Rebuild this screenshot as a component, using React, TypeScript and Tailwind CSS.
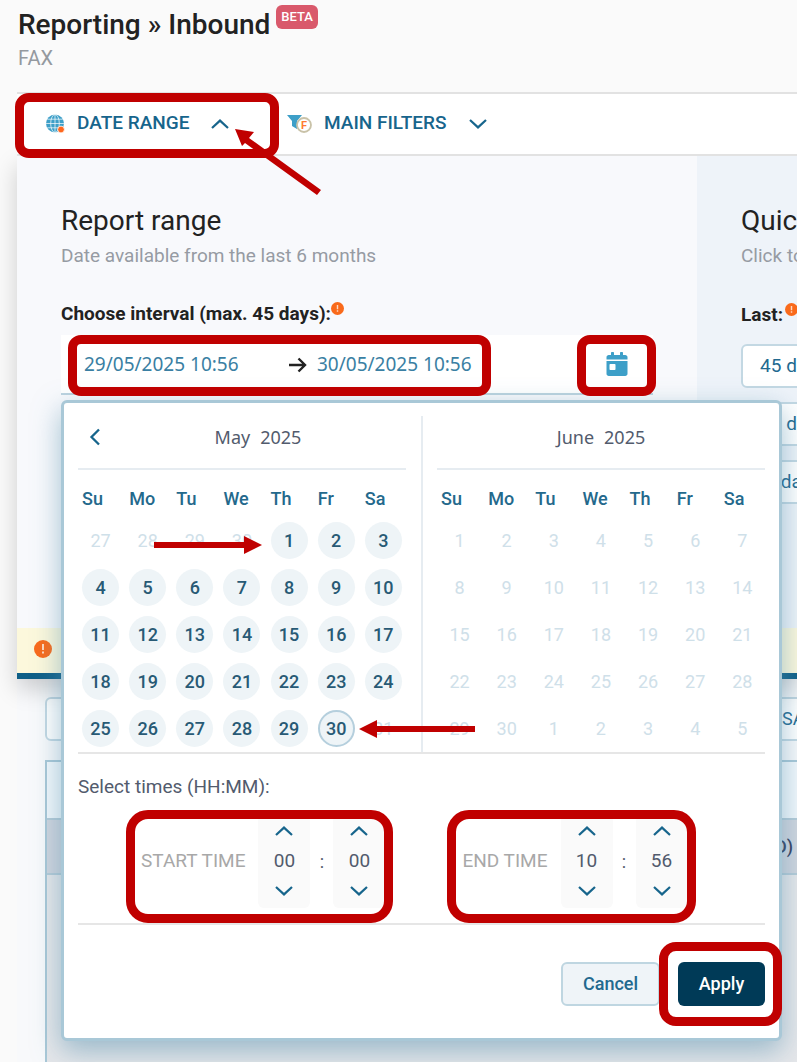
import { useState, type ReactNode } from "react";
import clsx from "clsx";
import { FaCalendarDay } from "react-icons/fa";

const WEEKDAYS = ["Su", "Mo", "Tu", "We", "Th", "Fr", "Sa"];

interface Day {
  label: number;
  enabled: boolean;
}

function buildDays(prev: number[], total: number, next: number[], lastEnabled: number): Day[] {
  return [
    ...prev.map((label) => ({ label, enabled: false })),
    ...Array.from({ length: total }, (_, i) => ({ label: i + 1, enabled: i < lastEnabled })),
    ...next.map((label) => ({ label, enabled: false })),
  ];
}

const MAY = buildDays([27, 28, 29, 30], 31, [], 30);
const JUNE = buildDays([], 30, [1, 2, 3, 4, 5], 0);

function Chevron({ up = false }: { up?: boolean }) {
  return (
    <svg width="18" height="10" viewBox="0 0 18 10" fill="none" stroke="#17658c" strokeWidth="2.2" aria-hidden="true">
      <path d={up ? "M1 9 L9 1.6 L17 9" : "M1 1 L9 8.4 L17 1"} />
    </svg>
  );
}

function GlobeIcon() {
  return (
    <svg width="19" height="20" viewBox="0 0 19 20" aria-hidden="true">
      <circle cx="9" cy="9.5" r="9" fill="#3d9fc8" />
      <g fill="none" stroke="#fff" strokeWidth="0.7">
        <ellipse cx="9" cy="9.5" rx="4.3" ry="9" />
        <path d="M9 0.5V18.5M0 9.5H18M1.2 5.2H16.8M1.2 13.8H16.8" />
      </g>
      <circle cx="15" cy="15.5" r="3.4" fill="#ff671d" stroke="#fff" strokeWidth="0.8" />
    </svg>
  );
}

function FilterIcon() {
  return (
    <svg width="25" height="20" viewBox="0 0 25 20" aria-hidden="true">
      <path d="M0 1H15L10 7V15L5 12V7Z" fill="#3d9fc8" />
      <circle cx="17" cy="11" r="7" fill="#fff" stroke="#c9c2a8" strokeWidth="1.8" />
      <text x="17" y="15" textAnchor="middle" fontFamily="Roboto, sans-serif" fontSize="11" fontWeight="700" fill="#ff7a33">
        F
      </text>
    </svg>
  );
}

function AlertIcon({ size }: { size: number }) {
  return (
    <svg width={size} height={size} viewBox="0 0 18 18" className="shrink-0" aria-hidden="true">
      <circle cx="9" cy="9" r="9" fill="#f96a1b" />
      <path d="M8 4H10V10H8ZM8 11.5H10V13.5H8Z" fill="#ffd9c2" />
    </svg>
  );
}

function Highlight({ className }: { className: string }) {
  return <span className={clsx("pointer-events-none absolute z-20 border-[9px] border-[#c00000]", className)} />;
}

function NavTab({ icon, label, open }: { icon: ReactNode; label: string; open: boolean }) {
  return (
    <button
      type="button"
      aria-expanded={open}
      className="flex h-full items-center whitespace-nowrap text-[19px] font-medium text-[#17658c]"
    >
      {icon}
      <span className="ml-3">{label}</span>
      <span className="ml-[22px]">
        <Chevron up={open} />
      </span>
    </button>
  );
}

function Month({ title, days, selected, onSelect, back = false }: {
  title: string;
  days: Day[];
  selected?: number;
  onSelect?: (day: number) => void;
  back?: boolean;
}) {
  const [name, year] = title.split(" ");
  return (
    <div className="w-[328px]">
      <div className="relative flex h-[54px] items-center justify-center border-b-2 border-[#e6ecf1] pb-[10px] font-['Noto_Sans',sans-serif] text-lg text-[#525b6d]">
        {back && (
          <button type="button" aria-label="Previous month" className="absolute left-[11px]">
            <svg width="12" height="18" viewBox="0 0 12 18" fill="none" stroke="#17658c" strokeWidth="2.3">
              <path d="M10 1.5 L2.5 9 L10 16.5" />
            </svg>
          </button>
        )}
        <span className={clsx("flex gap-[10px]", back && "pl-8")}>
          <span>{name}</span>
          <span>{year}</span>
        </span>
      </div>
      <div className="grid grid-cols-7 gap-x-[10px] px-1 pt-[17px] text-lg leading-6 font-medium text-[#24698c]">
        {WEEKDAYS.map((day) => (
          <span key={day} className="w-[37px]">{day}</span>
        ))}
      </div>
      <div className="grid grid-cols-7 gap-[10px] px-1 pt-[11px] pb-[5px]">
        {days.map((day, i) => (
          <button
            key={i}
            type="button"
            disabled={!day.enabled}
            onClick={() => onSelect?.(day.label)}
            className={clsx(
              "flex h-[37px] w-[37px] items-center justify-center rounded-full text-lg",
              day.enabled ? "bg-[#eef4f7] font-medium text-[#285a75]" : "text-[#cfe0e9]",
              day.enabled && day.label === selected && "border-2 border-[#b5cfdd]"
            )}
          >
            {day.label}
          </button>
        ))}
      </div>
    </div>
  );
}

function Spinner({ label, initial, max }: { label: string; initial: number; max: number }) {
  const [value, setValue] = useState(initial);
  const step = (delta: number) => setValue((v) => (v + delta + max) % max);
  return (
    <div className="flex h-[93px] w-[52px] flex-col items-center justify-between rounded-md bg-[#fafafa] pt-[11px] pb-3">
      <button type="button" aria-label={`${label} up`} onClick={() => step(1)}>
        <Chevron up />
      </button>
      <input
        aria-label={label}
        readOnly
        value={String(value).padStart(2, "0")}
        className="w-10 bg-transparent text-center text-[19px] leading-6 text-[#525b6d] outline-none"
      />
      <button type="button" aria-label={`${label} down`} onClick={() => step(-1)}>
        <Chevron />
      </button>
    </div>
  );
}

function TimeGroup({ label, hours, minutes }: { label: string; hours: number; minutes: number }) {
  return (
    <div className="relative flex items-center">
      <span className="mr-[13px] text-[19px] whitespace-nowrap text-[#a8a8a8]">{label}</span>
      <Spinner label={`${label} hours`} initial={hours} max={24} />
      <span className="w-[23px] text-center text-lg text-[#525b6d]">:</span>
      <Spinner label={`${label} minutes`} initial={minutes} max={60} />
      <Highlight className="-top-[5px] -right-[8px] -bottom-[15px] -left-[15px] rounded-[22px]" />
    </div>
  );
}

function DatePopup() {
  const [selected, setSelected] = useState(30);
  return (
    <div className="absolute top-full left-0 z-10 mt-[5px] w-[721px] rounded-md border-[3px] border-[#a9c8d7] bg-white px-[14px] pb-8 shadow-[0_10px_28px_rgba(90,145,175,0.55)]">
      <div className="flex justify-between border-b-2 border-[#e6e6e6] pt-[13px]">
        <Month title="May 2025" days={MAY} selected={selected} onSelect={setSelected} back />
        <div className="w-[2px] bg-[#e6ecf1]" />
        <Month title="June 2025" days={JUNE} />
      </div>
      <p className="pt-[21px] text-[19px] leading-6 text-[#525b6d]">Select times (HH:MM):</p>
      <div className="flex gap-[77px] border-b-2 border-[#e6e6e6] pt-4 pb-[15px] pl-[63px]">
        <TimeGroup label="START TIME" hours={0} minutes={0} />
        <TimeGroup label="END TIME" hours={10} minutes={56} />
      </div>
      <div className="flex justify-end gap-[18px] pt-[37px] text-lg font-medium">
        <button type="button" className="h-11 w-[99px] rounded-md border-2 border-[#bfd6e1] bg-[#eff4f8] text-[#22698f]">
          Cancel
        </button>
        <div className="relative">
          <button type="button" className="h-11 w-[87px] rounded-md bg-[#003a57] text-white">
            Apply
          </button>
          <Highlight className="-top-[20px] -right-[17px] -bottom-[20px] -left-[19px] rounded-[17px]" />
        </div>
      </div>
      <svg className="absolute top-[133px] left-[90px] z-20" width="108" height="18" viewBox="0 0 108 18" fill="#c00000" aria-hidden="true">
        <path d="M0 6H90V0L108 9L90 18V12H0Z" />
      </svg>
      <svg className="absolute top-[317px] left-[295px] z-20" width="116" height="18" viewBox="0 0 116 18" fill="#c00000" aria-hidden="true">
        <path d="M116 6H18V0L0 9L18 18V12H116Z" />
      </svg>
    </div>
  );
}

function IntervalField() {
  return (
    <div className="relative mt-[9px]">
      <div className="flex h-[60px] items-center border-b-2 border-[#bcd3df] bg-white">
        <div className="relative ml-[7px] flex h-full w-[423px] items-center pt-px pl-4 font-['Noto_Sans',sans-serif] text-[19px] text-[#3a7fa3]">
          <input id="interval" aria-label="Start date" defaultValue="29/05/2025 10:56" className="w-[205px] bg-transparent outline-none" />
          <svg width="18" height="16" viewBox="0 0 18 16" fill="none" stroke="#222" strokeWidth="2.4" aria-hidden="true">
            <path d="M0 8H16M9.5 1.5L16 8L9.5 14.5" />
          </svg>
          <input aria-label="End date" defaultValue="30/05/2025 10:56" className="ml-[10px] w-[160px] bg-transparent outline-none" />
          <Highlight className="inset-x-0 top-0 -bottom-[3px] rounded-[13px]" />
        </div>
        <div className="relative mr-[-3px] ml-auto flex h-full w-[79px] items-center justify-center">
          <button type="button" aria-label="Open calendar" className="text-2xl text-[#3d9fc8]">
            <FaCalendarDay />
          </button>
          <Highlight className="inset-x-0 top-0 -bottom-[3px] rounded-[13px]" />
        </div>
      </div>
      <DatePopup />
    </div>
  );
}

export default function App() {
  return (
    <div className="flex min-h-screen flex-col overflow-hidden bg-[#fafafa] font-[Roboto,sans-serif] text-[#222]">
      <header className="h-[92px] pt-[9px] pl-[18px]">
        <div className="flex items-start">
          <h1 className="text-[28px] leading-8 font-medium">Reporting » Inbound</h1>
          <span className="-mt-1 ml-[6px] rounded-md bg-[#d9596b] px-[5px] text-[13px] leading-6 font-medium text-white">BETA</span>
        </div>
        <p className="mt-[3px] text-xl leading-7 text-[#94999f]">FAX</p>
      </header>

      <nav className="relative z-20 ml-[17px] flex h-16 border-y-2 border-[#e2e2e2] bg-white">
        <div className="relative w-[262px] pb-px pl-[29px]">
          <NavTab icon={<GlobeIcon />} label="DATE RANGE" open />
          <Highlight className="-top-px right-0 -bottom-[4px] -left-[2px] rounded-[14px]" />
          <svg className="absolute top-[34px] left-[217px] z-20" width="88" height="68" viewBox="0 0 88 68" fill="#c00000" aria-hidden="true">
            <path d="M1 1L20 4L15 10L87 62L83 67L11 15L8 18Z" />
          </svg>
        </div>
        <div className="pb-px pl-2">
          <NavTab icon={<FilterIcon />} label="MAIN FILTERS" open={false} />
        </div>
      </nav>

      <section className="relative z-10 ml-[17px] shadow-[0_10px_22px_rgba(0,0,0,0.18)]">
        <div className="flex min-h-[472px]">
          <div className="grow bg-[#f8f9fc] px-11 pt-[47px]">
            <h2 className="text-[28px] leading-9">Report range</h2>
            <p className="mt-[5px] text-[19px] leading-6 text-[#969ba3]">Date available from the last 6 months</p>
            <label htmlFor="interval" className="mt-[34px] flex text-[19px] leading-6 font-bold">
              Choose interval (max. 45 days):
              <AlertIcon size={13} />
            </label>
            <IntervalField />
          </div>
          <aside className="w-[100px] shrink-0 overflow-hidden bg-[#eef3f9] pt-[47px] pl-11 whitespace-nowrap">
            <h2 className="text-[28px] leading-9">Quick range</h2>
            <p className="mt-[5px] text-[19px] leading-6 text-[#969ba3]">Click to select</p>
            <p className="mt-[35px] flex gap-[2px] text-[19px] leading-6 font-bold">
              Last:
              <AlertIcon size={13} />
            </p>
            <div className="mt-[17px] flex w-[104px] flex-col gap-[14px] text-[19px] text-[#22698f]">
              {["45 days", "30 days", "7 days"].map((range) => (
                <button key={range} type="button" className="h-11 rounded-md border-2 border-[#c3d8e3] bg-white">
                  {range}
                </button>
              ))}
            </div>
          </aside>
        </div>
        <div className="flex h-[51px] items-center border-b-[6px] border-[#0f5f87] bg-[#fcf8dc] pb-1 pl-[17px]">
          <AlertIcon size={18} />
        </div>
      </section>

      <main className="ml-[17px] flex grow flex-col bg-[#f8f9fb] pt-[18px] pl-7">
        <div className="flex justify-between overflow-hidden whitespace-nowrap">
          <button type="button" aria-label="Views" className="h-11 w-[200px] rounded-md border-2 border-[#c3d8e3] bg-white" />
          <button
            type="button"
            className="h-11 w-[60px] overflow-hidden rounded-l-md border-2 border-r-0 border-[#c3d8e3] bg-white pl-[43px] text-left text-lg text-[#22698f]"
          >
            SAVE
          </button>
        </div>
        <div className="mt-[19px] flex grow flex-col border-t-2 border-l-2 border-[#a9c8d7] bg-[#e6e7ea]">
          <table className="w-full">
            <thead>
              <tr className="h-[57px] bg-[#f2f8fc]">
                <td />
              </tr>
              <tr className="h-[55px] border-y-2 border-[#b5cbd7] bg-[#d0d5de]">
                <th className="pr-1 text-right text-lg font-medium text-[#333d5c]">(ID)</th>
              </tr>
            </thead>
          </table>
        </div>
      </main>
    </div>
  );
}
